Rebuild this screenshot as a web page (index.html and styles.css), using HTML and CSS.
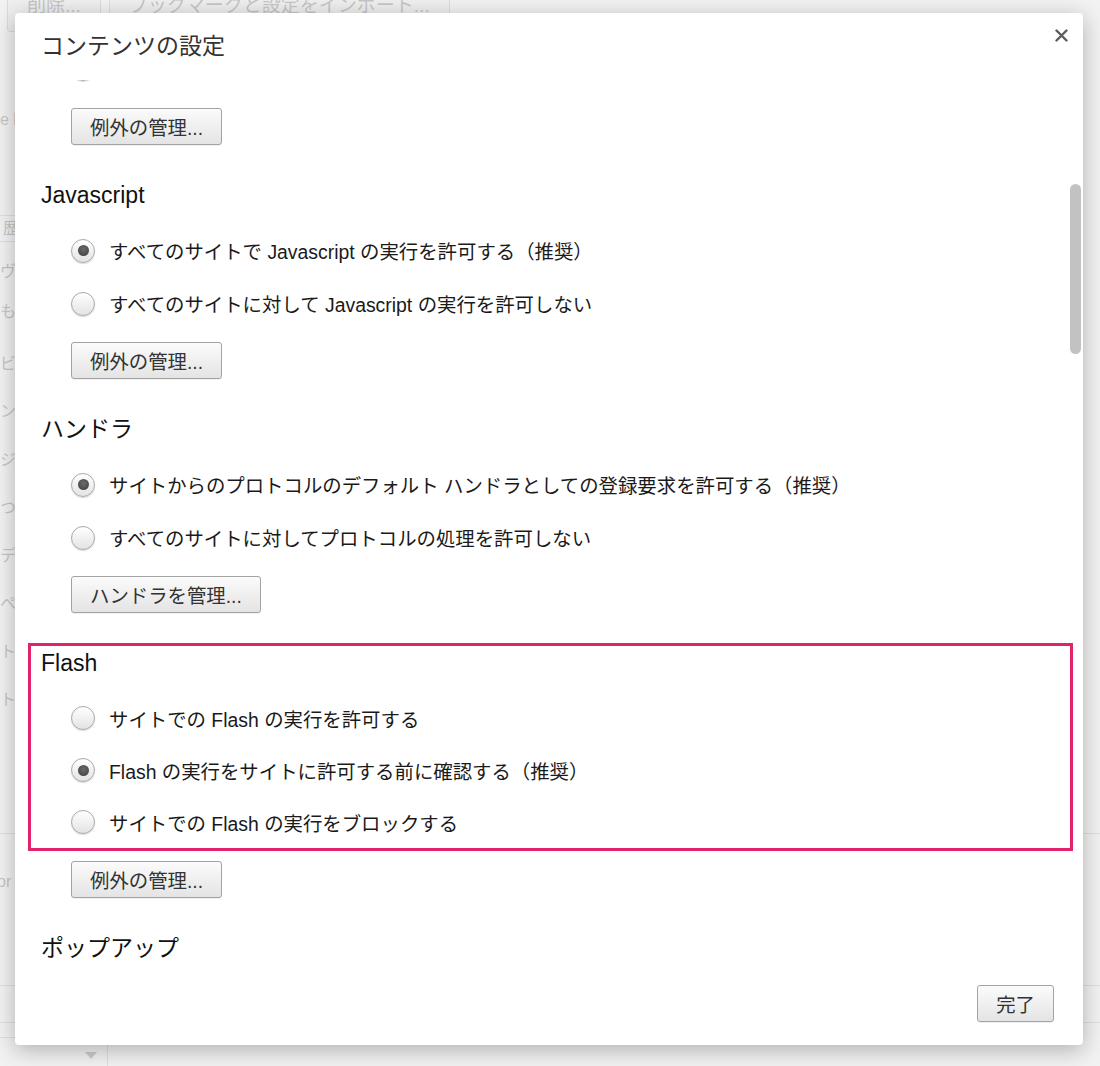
FILE: index.html
```html
<!DOCTYPE html>
<html lang="ja">
<head>
    <meta charset="UTF-8">
    <meta name="viewport" content="width=device-width, initial-scale=1.0">
    <title>設定 - コンテンツの設定</title>
    <link rel="stylesheet" href="styles.css">
</head>
<body>

    <!-- 後ろにある設定ページ（ダイアログ表示中は薄く見える） -->
    <div class="settings-page">
        <div class="page-actions">
            <span class="page-btn">削除...</span>
            <span class="page-btn">ブックマークと設定をインポート...</span>
        </div>
        <div class="page-line first">e l</div>
        <div class="page-field">歴</div>
        <ul class="page-list">
            <li class="short">ヴ</li>
            <li class="short">も</li>
            <li class="spaced">ビ</li>
            <li>ン</li>
            <li>ジ</li>
            <li>つ</li>
            <li>デ</li>
            <li>ペ</li>
            <li>ト</li>
            <li>ト</li>
        </ul>
        <div class="page-rule rule-a"></div>
        <div class="page-line or">or</div>
        <div class="page-rule rule-b"></div>
        <div class="page-rule rule-c"></div>
        <div class="page-select"><span class="select-arrow"></span></div>
    </div>

    <div class="overlay">
        <div class="dialog">
            <div class="dialog-header">
                <h1>コンテンツの設定</h1>
                <button class="close-btn" aria-label="閉じる">
                    <svg width="13" height="13" viewBox="0 0 13 13">
                        <path d="M1.5 1.5 L11.5 11.5 M11.5 1.5 L1.5 11.5" stroke="#5c5c5c" stroke-width="2.4" stroke-linecap="round"/>
                    </svg>
                </button>
            </div>

            <div class="dialog-body">
                <div class="settings-list">
                    <!-- 上にスクロールして隠れている行 -->
                    <label class="radio-row scrolled-past"><span class="radio"></span></label>
                    <button class="btn">例外の管理...</button>

                    <h2 class="section-title">Javascript</h2>
                    <label class="radio-row"><span class="radio checked"></span>すべてのサイトで Javascript の実行を許可する（推奨）</label>
                    <label class="radio-row"><span class="radio"></span>すべてのサイトに対して Javascript の実行を許可しない</label>
                    <button class="btn">例外の管理...</button>

                    <h2 class="section-title">ハンドラ</h2>
                    <label class="radio-row"><span class="radio checked"></span>サイトからのプロトコルのデフォルト ハンドラとしての登録要求を許可する（推奨）</label>
                    <label class="radio-row"><span class="radio"></span>すべてのサイトに対してプロトコルの処理を許可しない</label>
                    <button class="btn">ハンドラを管理...</button>

                    <div class="highlight">
                        <h2 class="section-title">Flash</h2>
                        <label class="radio-row"><span class="radio"></span>サイトでの Flash の実行を許可する</label>
                        <label class="radio-row"><span class="radio checked"></span>Flash の実行をサイトに許可する前に確認する（推奨）</label>
                        <label class="radio-row"><span class="radio"></span>サイトでの Flash の実行をブロックする</label>
                    </div>
                    <button class="btn after-highlight">例外の管理...</button>

                    <h2 class="section-title">ポップアップ</h2>
                </div>
                <div class="scroll-thumb"></div>
            </div>

            <div class="dialog-footer">
                <button class="btn">完了</button>
            </div>
        </div>
    </div>

</body>
</html>
```

FILE: styles.css
```css
:root {
    --text-main: #1a1a1a;
    --text-title: #333;
    --border-btn: #a3a3a3;
    --highlight: #e2226a;
    --thumb: #c2c2c2;
}

* {
    box-sizing: border-box;
}

body {
    margin: 0;
    width: 1100px;
    height: 1066px;
    overflow: hidden;
    position: relative;
    background: #fff;
    font-family: "Liberation Sans", "Noto Sans CJK JP", sans-serif;
    color: #333;
}

/* ---- 後ろの設定ページ ---- */
.settings-page {
    display: flex;
    flex-direction: column;
    font-size: 16px;
}

.page-actions {
    display: flex;
    gap: 8px;
    margin: -20px 0 0 7px;
    font-size: 19px;
}

.page-btn {
    height: 52px;
    line-height: 50px;
    padding: 0 19px;
    border: 1px solid #999;
    border-radius: 3px;
    background: linear-gradient(#fafafa, #e2e2e2);
}

.page-line {
    height: 30px;
    line-height: 30px;
}

.page-line.first {
    margin-top: 73px;
}

.page-line.or {
    margin-top: 33px;
    margin-left: -3px;
}

.page-field {
    margin: 80px 0 0 -10px;
    width: 200px;
    height: 27px;
    line-height: 25px;
    padding-left: 12px;
    border: 1px solid #aaa;
}

.page-list {
    list-style: none;
    margin: 10px 0 0;
    padding: 0;
}

.page-list li {
    height: 48px;
    line-height: 48px;
}

.page-list li.short {
    height: 40px;
    line-height: 40px;
}

.page-list li.spaced {
    margin-top: 8px;
}

.page-rule {
    height: 1px;
    background: #aaa;
}

.rule-a { margin-top: 109px; }
.rule-b { margin-top: 88px; }
.rule-c { margin-top: 36px; }

.page-select {
    margin-top: 14px;
    width: 108px;
    height: 40px;
    border-top: 1px solid #aaa;
    border-right: 1px solid #aaa;
    display: flex;
    justify-content: flex-end;
    padding: 14px 10px 0 0;
}

.select-arrow {
    width: 0;
    height: 0;
    border-left: 6px solid transparent;
    border-right: 6px solid transparent;
    border-top: 7px solid #555;
}

/* ---- ダイアログ ---- */
.overlay {
    position: absolute;
    inset: 0;
    display: flex;
    padding: 13px 17px 21px 15px;
    background: rgba(238, 238, 238, 0.78);
}

.dialog {
    flex: 1;
    display: flex;
    flex-direction: column;
    background: #fff;
    border-radius: 4px;
    box-shadow: 0 5px 22px rgba(0, 0, 0, 0.28);
    overflow: hidden;
}

.dialog-header {
    height: 67px;
    flex: none;
    display: flex;
    justify-content: space-between;
    align-items: flex-start;
    padding: 14px 13px 0 26px;
}

.dialog-header h1 {
    margin: 4px 0 0;
    font-size: 23px;
    line-height: 30px;
    font-weight: normal;
    color: var(--text-title);
}

.close-btn {
    width: 17px;
    height: 17px;
    padding: 0;
    border: none;
    background: none;
    display: flex;
    justify-content: center;
    align-items: center;
    cursor: pointer;
}

.dialog-body {
    flex: 1;
    position: relative;
    overflow: hidden;
    padding-left: 26px;
}

.settings-list {
    display: flex;
    flex-direction: column;
    align-items: flex-start;
}

.section-title {
    margin: 35px 0 14px;
    font-size: 23px;
    line-height: 30px;
    font-weight: normal;
    color: #111;
}

.radio-row {
    height: 53px;
    display: flex;
    align-items: center;
    gap: 14px;
    padding-left: 30px;
    font-size: 19.4px;
    color: var(--text-main);
    white-space: nowrap;
}

/* スクロールで上に隠れた行：丸の下端だけが覗く */
.radio-row.scrolled-past {
    margin-top: -39px;
    height: 55px;
}

.radio {
    width: 24px;
    height: 24px;
    flex: none;
    border-radius: 50%;
    border: 1px solid #a9a9a9;
    background: linear-gradient(#ffffff, #e3e3e3);
    box-shadow: 0 1px 1px rgba(0, 0, 0, 0.15);
    display: flex;
    justify-content: center;
    align-items: center;
}

.radio.checked::after {
    content: "";
    width: 11px;
    height: 11px;
    border-radius: 50%;
    background: radial-gradient(circle at 50% 40%, #6a6a6a, #3e3e3e);
}

.btn {
    margin: 12px 0 0 30px;
    height: 37px;
    padding: 0 18px;
    border: 1px solid var(--border-btn);
    border-radius: 3px;
    background: linear-gradient(#fbfbfb, #e4e4e4);
    box-shadow: 0 1px 0 rgba(0, 0, 0, 0.06);
    font-family: inherit;
    font-size: 19.4px;
    color: #333;
    cursor: pointer;
}

.btn.after-highlight {
    margin-top: 10px;
}

/* Flash の枠 */
.highlight {
    align-self: stretch;
    margin: 30px 10px 0 -13px;
    padding: 2px 0 0 10px;
    border: 3px solid var(--highlight);
}

.highlight .section-title {
    margin-top: 0;
}

.highlight .radio-row {
    height: 52px;
}

.scroll-thumb {
    position: absolute;
    top: 104px;
    right: 2px;
    width: 11px;
    height: 170px;
    border-radius: 6px;
    background: var(--thumb);
}

.dialog-footer {
    height: 70px;
    flex: none;
    display: flex;
    justify-content: flex-end;
    align-items: flex-start;
    padding: 10px 29px 0 0;
}

.dialog-footer .btn {
    margin: 0;
}
```
